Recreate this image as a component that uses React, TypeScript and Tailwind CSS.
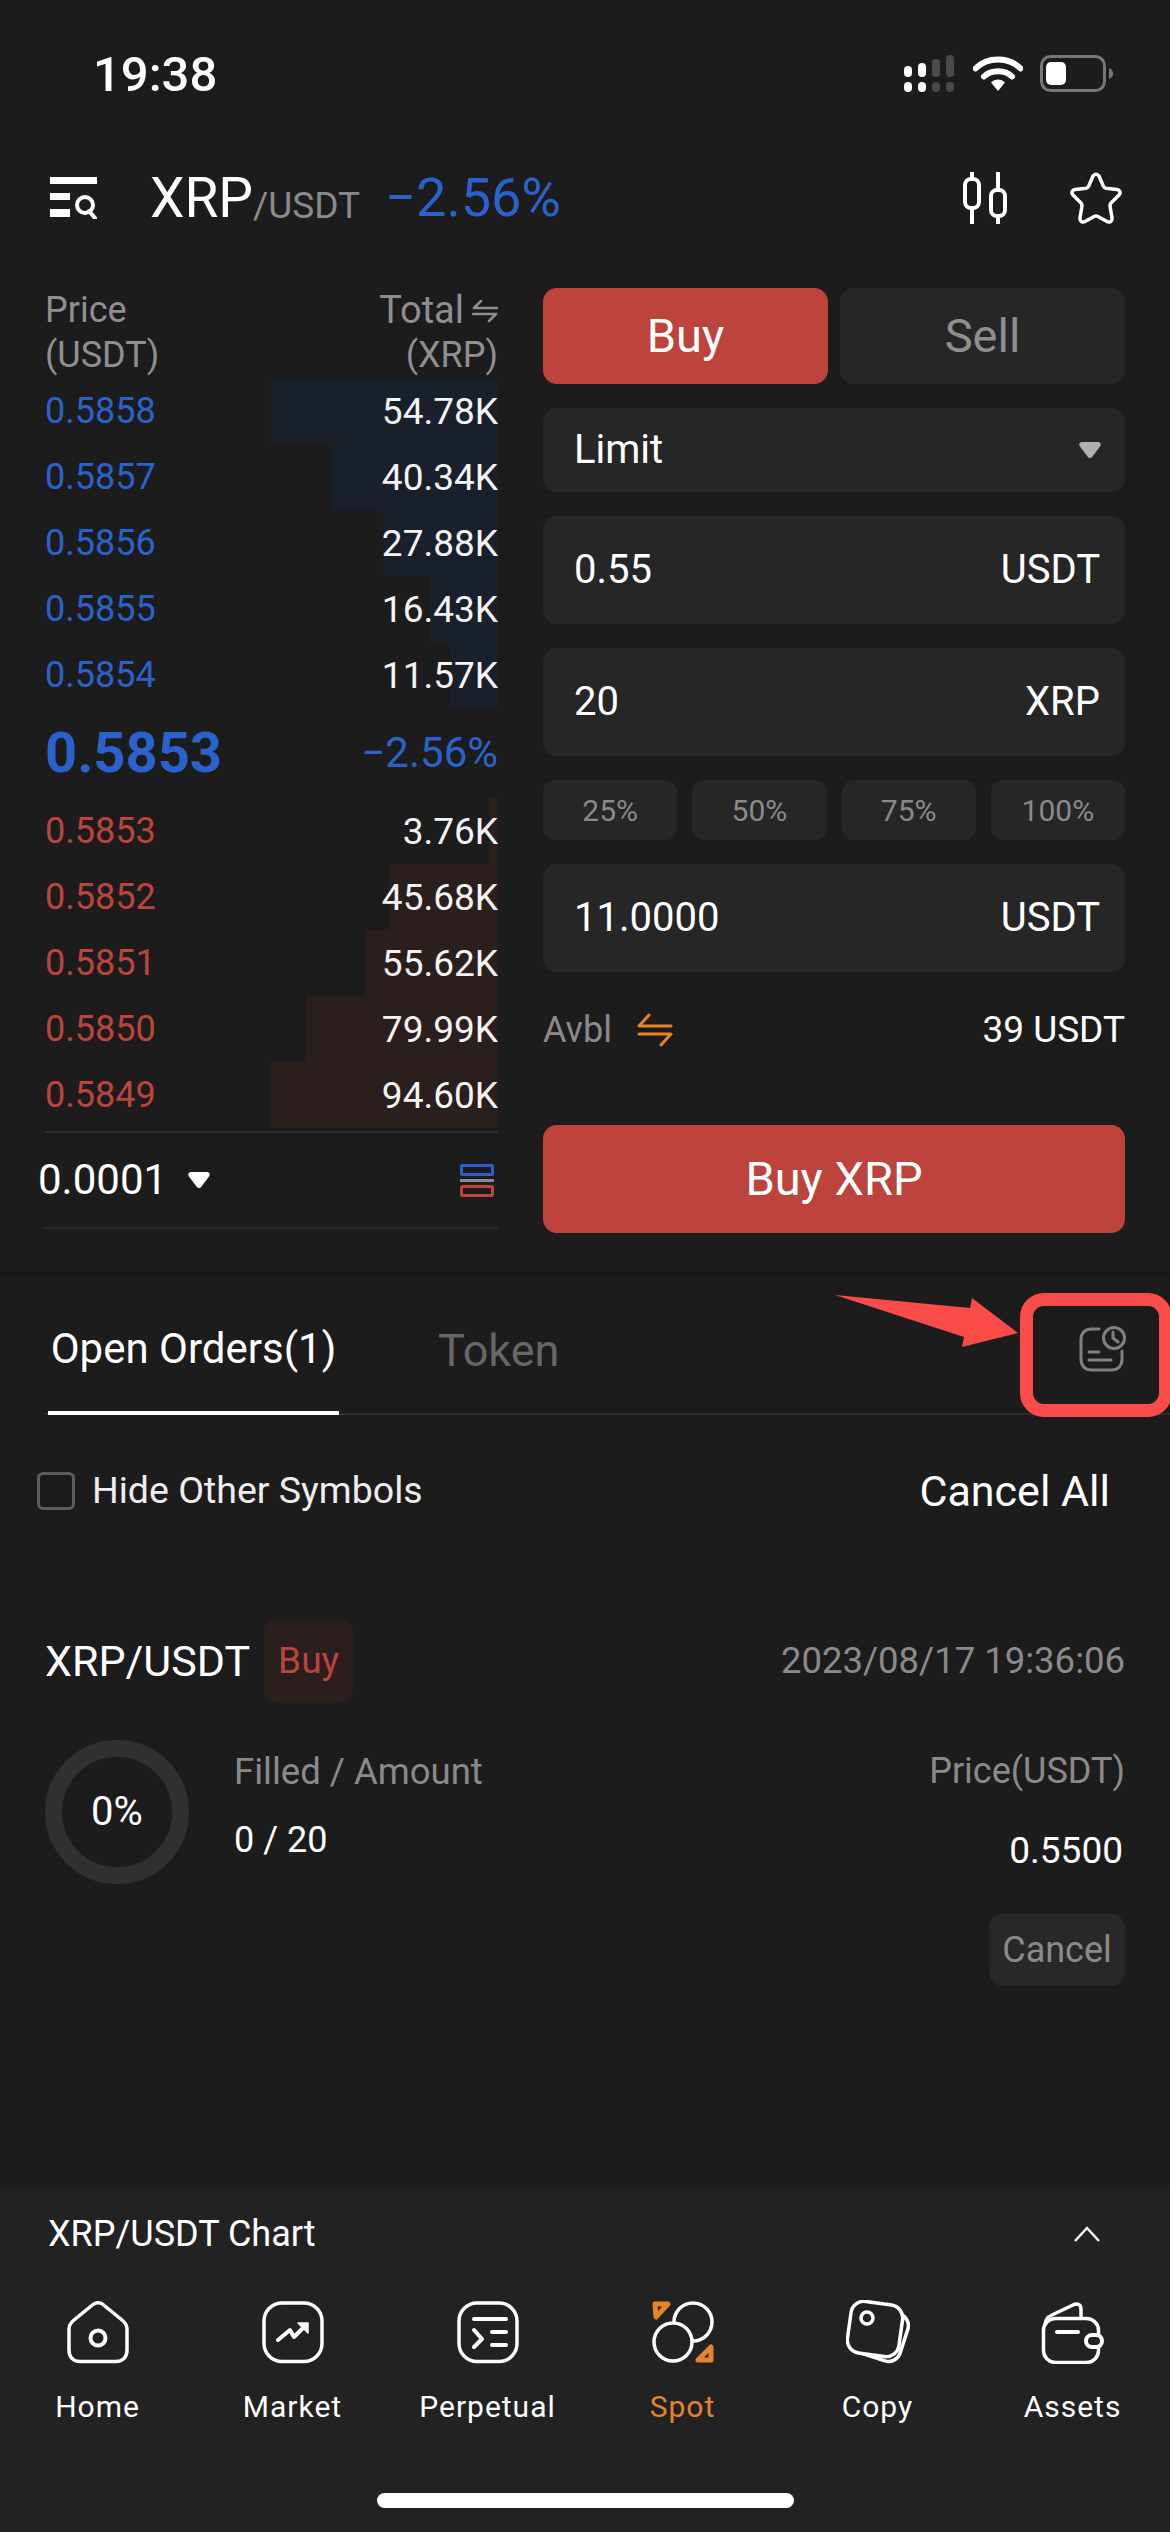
const asks = [
  { price: "0.5858", total: "54.78K", bar: 227 },
  { price: "0.5857", total: "40.34K", bar: 167 },
  { price: "0.5856", total: "27.88K", bar: 115 },
  { price: "0.5855", total: "16.43K", bar: 68 },
  { price: "0.5854", total: "11.57K", bar: 48 },
]

const bids = [
  { price: "0.5853", total: "3.76K", bar: 9 },
  { price: "0.5852", total: "45.68K", bar: 109 },
  { price: "0.5851", total: "55.62K", bar: 133 },
  { price: "0.5850", total: "79.99K", bar: 192 },
  { price: "0.5849", total: "94.60K", bar: 227 },
]

function BookRow({ price, total, bar, side }: { price: string; total: string; bar: number; side: "blue" | "red" }) {
  return (
    <div className="relative flex h-[66px] items-center justify-between leading-none">
      <div
        className={side === "blue" ? "absolute inset-y-0 right-0 bg-[#1a202b]" : "absolute inset-y-0 right-0 bg-[#2b1f1d]"}
        style={{ width: bar }}
      />
      <span className={side === "blue" ? "relative text-[36px] text-[#2a62cc]" : "relative text-[36px] text-[#bc443c]"}>{price}</span>
      <span className="relative text-[37px] text-[#f4f4f4]">{total}</span>
    </div>
  )
}

function Field({ value, unit }: { value: string; unit: string }) {
  return (
    <div className="flex h-[108px] items-center justify-between rounded-[14px] bg-[#262626] pl-[31px] pr-[25px] text-[40px] text-white">
      <span>{value}</span>
      <span>{unit}</span>
    </div>
  )
}

function StatusBar() {
  return (
    <div className="flex h-[148px] items-start justify-between pl-[93px] pr-[56px] pt-[55px]">
      <span className="text-[49px] font-medium leading-[40px] text-white">19:38</span>
      <div className="flex items-start gap-[17px]">
        <svg width="52" height="38" viewBox="0 0 52 38" fill="none">
          <rect x="0" y="11" width="8" height="11" rx="4" fill="#fff" />
          <rect x="14" y="8" width="8" height="14" rx="4" fill="#fff" />
          <rect x="28" y="4" width="8" height="18" rx="4" fill="#4a4a4a" />
          <rect x="42" y="0" width="8" height="22" rx="4" fill="#4a4a4a" />
          <rect x="0" y="27" width="8" height="10" rx="4" fill="#fff" />
          <rect x="14" y="27" width="8" height="10" rx="4" fill="#fff" />
          <rect x="28" y="27" width="8" height="10" rx="4" fill="#4a4a4a" />
          <rect x="42" y="27" width="8" height="10" rx="4" fill="#4a4a4a" />
        </svg>
        <svg width="50" height="37" viewBox="0 0 50 37" fill="none">
          <path d="M2.5 13.5C14.5 1.5 35.5 1.5 47.5 13.5" stroke="#fff" strokeWidth="6" strokeLinecap="round" />
          <path d="M11 21.5C18 14.5 32 14.5 39 21.5" stroke="#fff" strokeWidth="6" strokeLinecap="round" />
          <path d="M18 27.5L25 36L32 27.5C28 23.5 22 23.5 18 27.5Z" fill="#fff" />
        </svg>
        <svg width="74" height="38" viewBox="0 0 74 38" fill="none">
          <rect x="1.5" y="1.5" width="63" height="34" rx="9" stroke="#777" strokeWidth="3" />
          <rect x="6" y="7" width="20" height="23" rx="5" fill="#fff" />
          <path d="M69 13C72 14 73 16 73 18.5C73 21 72 23 69 24Z" fill="#777" />
        </svg>
      </div>
    </div>
  )
}

function NavBar() {
  return (
    <div className="flex h-[100px] items-center justify-between pl-[50px] pr-[47px]">
      <div className="flex items-center">
        <svg width="48" height="42" viewBox="0 0 48 42" fill="none">
          <rect x="0" y="0" width="47" height="7" fill="#fff" />
          <rect x="0" y="16" width="20" height="7" fill="#fff" />
          <rect x="0" y="32" width="20" height="8" fill="#fff" />
          <circle cx="35" cy="28" r="8" stroke="#fff" strokeWidth="4" />
          <path d="M39 34L45 41" stroke="#fff" strokeWidth="4" strokeLinecap="round" />
        </svg>
        <span className="ml-[52px] text-[55px] leading-none text-white">XRP</span>
        <span className="mt-[14px] text-[37px] leading-none text-[#8a8a8a]">/USDT</span>
        <span className="ml-[25px] text-[54px] leading-none text-[#2a62cc]">−2.56%</span>
      </div>
      <div className="flex items-center gap-[60px]">
        <svg width="46" height="52" viewBox="0 0 46 52" fill="none" stroke="#fff" strokeWidth="4" strokeLinecap="round">
          <path d="M9 1V7M9 36V51M35 1V18M35 44V51" />
          <rect x="2" y="7" width="14" height="29" rx="6" />
          <rect x="28" y="18" width="14" height="26" rx="6" />
        </svg>
        <svg width="54" height="52" viewBox="0 0 54 52" fill="none" stroke="#fff" strokeWidth="3.5" strokeLinejoin="round">
          <path d="M24 4C25.5 1.5 28.5 1.5 30 4L34.5 14.5C35 15.5 36 16 37 16.2L48 17.5C51 18 52 21 50 23L42 31C41 32 41 33 41 34L43 46C43.5 49 40.5 51 38 49.5L29 44.5C28 44 26 44 25 44.5L16 49.5C13.5 51 10.5 49 11 46L13 34C13 33 13 32 12 31L4 23C2 21 3 18 6 17.5L17 16.2C18 16 19 15.5 19.5 14.5Z" />
        </svg>
      </div>
    </div>
  )
}

function OrderBook() {
  return (
    <div className="ml-[45px] w-[453px]">
      <div className="flex h-[90px] justify-between text-[36px] leading-[45px] text-[#8f8f8f]">
        <div>
          Price
          <br />
          (USDT)
        </div>
        <div className="text-right">
          <div className="flex items-center justify-end gap-[8px] text-[38px]">
            Total
            <svg width="26" height="24" viewBox="0 0 26 24" fill="none" stroke="#8f8f8f" strokeWidth="2.5" strokeLinecap="round" strokeLinejoin="round">
              <path d="M9 2L2 9H25M17 22L24 15H1" />
            </svg>
          </div>
          (XRP)
        </div>
      </div>
      {asks.map((row) => (
        <BookRow key={row.price} {...row} side="blue" />
      ))}
      <div className="flex h-[90px] items-center justify-between">
        <span className="text-[56px] font-bold leading-none text-[#2a62cc]">0.5853</span>
        <span className="text-[42px] leading-none text-[#2a62cc]">−2.56%</span>
      </div>
      {bids.map((row) => (
        <BookRow key={row.price} {...row} side="red" />
      ))}
      <div className="mt-[3px] flex h-[98px] items-center justify-between border-y-2 border-t-[#2e2e2e] border-b-[#2a2a2a]">
        <div className="-ml-[7px] flex items-center gap-[21px]">
          <span className="text-[42px] leading-none text-white">0.0001</span>
          <svg width="22" height="16" viewBox="0 0 22 16" fill="#fff">
            <path d="M3 0H19C21.5 0 22.5 2.5 21 4.5L13.5 14.5C12 16.5 10 16.5 8.5 14.5L1 4.5C-0.5 2.5 0.5 0 3 0Z" />
          </svg>
        </div>
        <div className="mr-[4px] flex w-[34px] flex-col gap-[3px]">
          <div className="h-[12px] rounded-[2px] border-[3px] border-[#2a62cc]" />
          <div className="h-[3px] bg-[#8a8a8a]" />
          <div className="h-[12px] rounded-[2px] border-[3px] border-[#bc443c]" />
        </div>
      </div>
    </div>
  )
}

function TradeForm() {
  return (
    <div className="ml-[45px] flex w-[582px] flex-col gap-[24px]">
      <div className="flex gap-[12px]">
        <div className="flex h-[96px] flex-1 items-center justify-center rounded-[14px] bg-[#bc443c] text-[47px] text-white">Buy</div>
        <div className="flex h-[96px] flex-1 items-center justify-center rounded-[14px] bg-[#262626] text-[47px] text-[#8f8f8f]">Sell</div>
      </div>
      <div className="flex h-[84px] items-center justify-between rounded-[14px] bg-[#262626] pl-[31px] pr-[24px] text-[40px] text-white">
        <span>Limit</span>
        <svg width="22" height="16" viewBox="0 0 22 16" fill="#b0b0b0">
          <path d="M3 0H19C21.5 0 22.5 2.5 21 4.5L13.5 14.5C12 16.5 10 16.5 8.5 14.5L1 4.5C-0.5 2.5 0.5 0 3 0Z" />
        </svg>
      </div>
      <Field value="0.55" unit="USDT" />
      <Field value="20" unit="XRP" />
      <div className="grid grid-cols-4 gap-[15px]">
        {["25%", "50%", "75%", "100%"].map((pct) => (
          <div key={pct} className="flex h-[60px] items-center justify-center rounded-[12px] bg-[#262626] text-[30px] text-[#8a8a8a]">
            {pct}
          </div>
        ))}
      </div>
      <Field value="11.0000" unit="USDT" />
      <div className="flex h-[68px] items-center justify-between">
        <div className="flex items-center gap-[25px] text-[36px] text-[#8a8a8a]">
          Avbl
          <svg width="36" height="34" viewBox="0 0 36 34" fill="none" stroke="#e8832a" strokeWidth="3" strokeLinecap="round" strokeLinejoin="round">
            <path d="M12 2L2 13H34M24 32L34 21H2" />
          </svg>
        </div>
        <span className="text-[37px] text-white">39 USDT</span>
      </div>
      <div className="mt-[37px] flex h-[108px] items-center justify-center rounded-[14px] bg-[#bc443c] text-[47px] text-white">Buy XRP</div>
    </div>
  )
}

function OrdersPanel() {
  return (
    <div>
      <div className="ml-[45px] flex h-[137px] items-end gap-[99px] border-b-2 border-[#2e2e2e] pt-[3px]">
        <div className="-mb-[2px] ml-[3px] flex h-full w-[291px] items-center justify-center border-b-[4px] border-white pt-[4px] text-[42px] leading-none text-white">
          Open Orders(1)
        </div>
        <div className="flex h-full items-center pt-[6px] text-[45px] leading-none text-[#666]">Token</div>
      </div>
      <div className="flex h-[150px] items-center justify-between pl-[37px] pr-[60px] pt-[2px]">
        <div className="flex items-center gap-[17px]">
          <div className="h-[38px] w-[38px] rounded-[6px] border-[3px] border-[#5c5c5c]" />
          <span className="text-[37.5px] leading-none text-[#eee]">Hide Other Symbols</span>
        </div>
        <span className="text-[43px] leading-none text-white">Cancel All</span>
      </div>
      <div className="mt-[54px] pl-[45px] pr-[45px]">
        <div className="flex h-[84px] items-center justify-between">
          <div className="flex items-center gap-[14px]">
            <span className="text-[43px] leading-none text-white">XRP/USDT</span>
            <span className="flex h-[84px] w-[89px] items-center justify-center rounded-[12px] bg-[#2b1f1d] text-[37px] text-[#bc443c]">Buy</span>
          </div>
          <span className="text-[36.5px] leading-none text-[#8a8a8a]">2023/08/17 19:36:06</span>
        </div>
        <div className="mt-[37px] flex justify-between">
          <div className="flex">
            <div className="flex h-[144px] w-[144px] items-center justify-center rounded-full border-[17px] border-[#303030] text-[40px] leading-none text-white">0%</div>
            <div className="ml-[45px] pt-[14px]">
              <div className="text-[36.5px] leading-[36px] text-[#8a8a8a]">Filled / Amount</div>
              <div className="mt-[32px] text-[36px] leading-[36px] text-white">0 / 20</div>
            </div>
          </div>
          <div className="flex flex-col items-end">
            <div className="pt-[13px] text-[36px] leading-[36px] text-[#8a8a8a]">Price(USDT)</div>
            <div className="mt-[44px] pr-[2px] text-[37px] leading-[36px] text-white">0.5500</div>
            <div className="mt-[45px] flex h-[72px] w-[136px] items-center justify-center rounded-[14px] bg-[#282828] text-[36px] text-[#8a8a8a]">Cancel</div>
          </div>
        </div>
      </div>
    </div>
  )
}

const tabIconProps = { width: 64, height: 64, viewBox: "0 0 64 64", fill: "none", stroke: "#fff", strokeWidth: 3.5, strokeLinecap: "round", strokeLinejoin: "round" } as const

const tabs = [
  {
    label: "Home",
    icon: (
      <svg {...tabIconProps}>
        <path d="M27 4.5C30 2.5 34 2.5 37 4.5L56 20C59 22.5 61 25 61 29V50C61 57 57 61.5 50 61.5H14C7 61.5 3 57 3 50V29C3 25 5 22.5 8 20Z" />
        <circle cx="32" cy="38" r="7.5" strokeWidth="4" />
      </svg>
    ),
  },
  {
    label: "Market",
    icon: (
      <svg {...tabIconProps}>
        <rect x="3" y="3" width="58" height="58.5" rx="18" />
        <path d="M17 40L29 30L33 37L44 26" strokeWidth="4" />
        <path d="M37 23H47V33Z" fill="#fff" strokeWidth="1.5" />
      </svg>
    ),
  },
  {
    label: "Perpetual",
    icon: (
      <svg {...tabIconProps}>
        <rect x="3" y="3" width="58" height="58.5" rx="18" />
        <path d="M18 19H50M18 30L26 39L18 47M36 32H50M36 45H50" strokeWidth="4" />
      </svg>
    ),
  },
  {
    label: "Spot",
    icon: (
      <svg {...tabIconProps}>
        <circle cx="42" cy="22" r="19" />
        <circle cx="22" cy="42" r="19" fill="#222" />
        <path d="M4 4H17L5 17Z" stroke="#e8832a" strokeWidth="5" />
        <path d="M60 60H47L60 47Z" stroke="#e8832a" strokeWidth="5" />
      </svg>
    ),
  },
  {
    label: "Copy",
    icon: (
      <svg {...tabIconProps}>
        <rect x="9" y="9" width="50" height="49" rx="12" transform="rotate(18 34 34)" />
        <rect x="3" y="3" width="52" height="52" rx="13" transform="rotate(8 29 29)" fill="#222" />
        <circle cx="21" cy="18" r="6" />
      </svg>
    ),
  },
  {
    label: "Assets",
    icon: (
      <svg {...tabIconProps}>
        <path d="M4 28C4 20 6 17 11 15L33 4.5C37 3 40 5 40 9V19" />
        <rect x="2.5" y="18.5" width="55" height="44" rx="12" fill="#222" />
        <path d="M16 32H37" strokeWidth="4" />
        <rect x="45" y="35" width="16" height="12" rx="6" fill="#222" strokeWidth="4" />
      </svg>
    ),
  },
]

function BottomBar() {
  return (
    <div className="mt-auto h-[345px] bg-[#222222]">
      <div className="flex h-[94px] items-center justify-between pl-[48px] pr-[70px]">
        <span className="text-[36px] leading-none text-white">XRP/USDT Chart</span>
        <svg width="26" height="16" viewBox="0 0 26 16" fill="none" stroke="#fff" strokeWidth="2.5">
          <path d="M1 15L13 2L25 15" />
        </svg>
      </div>
      <div className="mt-[19px] grid grid-cols-6">
        {tabs.map((tab) => (
          <div key={tab.label} className="flex flex-col items-center">
            {tab.icon}
            <span className={tab.label === "Spot" ? "mt-[23px] text-[30px] leading-[40px] tracking-[1px] text-[#e8832a]" : "mt-[23px] text-[30px] leading-[40px] tracking-[1px] text-white"}>
              {tab.label}
            </span>
          </div>
        ))}
      </div>
      <div className="mx-auto mt-[66px] h-[15px] w-[417px] rounded-full bg-white" />
    </div>
  )
}

export default function App() {
  return (
    <div className="relative flex h-[2532px] w-[1170px] flex-col overflow-hidden bg-[#1c1c1c] font-[Roboto,sans-serif]">
      <StatusBar />
      <NavBar />
      <div className="mt-[40px] flex h-[984px] items-start">
        <OrderBook />
        <TradeForm />
      </div>
      <div className="h-[6px] bg-[#191919]" />
      <OrdersPanel />
      <BottomBar />

      {/* annotation drawn over the screenshot */}
      <div className="absolute left-[1020px] top-[1293px] h-[124px] w-[152px] rounded-[24px] border-[13px] border-[#f94c48]" />
      <svg className="absolute left-[830px] top-[1290px]" width="195" height="62" viewBox="0 0 195 62" fill="#f94c48">
        <path d="M5 5L140 18L142 8L188 43L132 57L134 47Z" />
      </svg>
      <svg className="absolute left-[1077px] top-[1323px]" width="52" height="52" viewBox="0 0 52 52" fill="none" stroke="#808080" strokeWidth="3" strokeLinecap="round">
        <path d="M22 6H15C8 6 4 10 4 17V36C4 43 8 47 15 47H34C41 47 45 43 45 36V28" />
        <circle cx="37" cy="15" r="10.5" />
        <path d="M36 9V15L41 19M12 29H22M12 37H34" />
      </svg>
    </div>
  )
}
